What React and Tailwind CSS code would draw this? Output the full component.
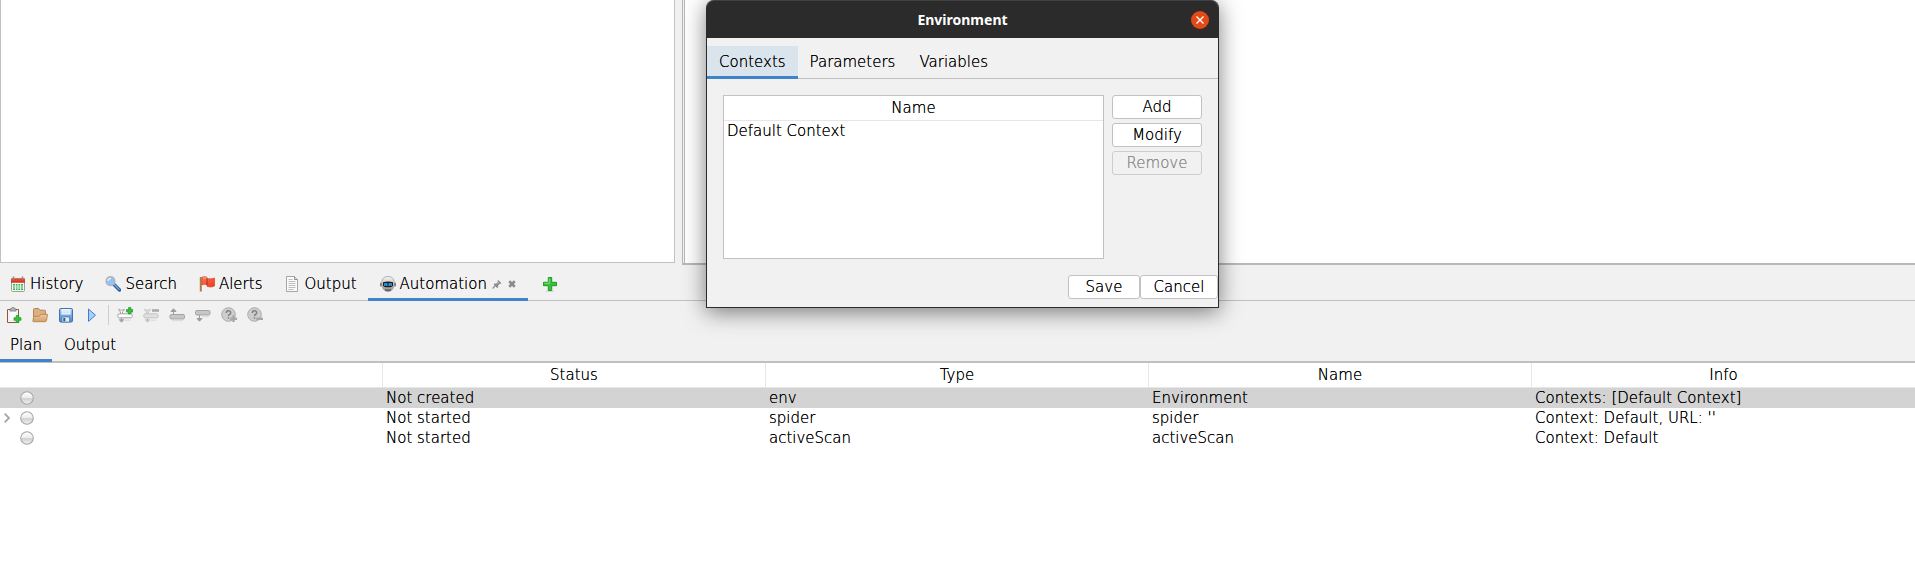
import React from "react";

function Svg({ children, className = "size-4" }) {
  return (
    <svg viewBox="0 0 16 16" className={className + " shrink-0"} fill="none" aria-hidden="true">
      {children}
    </svg>
  );
}

function Defs() {
  return (
    <svg className="absolute size-0" aria-hidden="true">
      <defs>
        <linearGradient id="wood" x1="0" y1="0" x2="0" y2="1">
          <stop offset="0" stopColor="#ecc9a2" />
          <stop offset="1" stopColor="#d79d66" />
        </linearGradient>
        <linearGradient id="blue" x1="0" y1="0" x2="0" y2="1">
          <stop offset="0" stopColor="#a9cdf2" />
          <stop offset="1" stopColor="#4a86cf" />
        </linearGradient>
        <linearGradient id="red" x1="0" y1="0" x2="1" y2="1">
          <stop offset="0" stopColor="#ff7a5c" />
          <stop offset="1" stopColor="#e63a1c" />
        </linearGradient>
        <linearGradient id="orbTop" x1="0" y1="0" x2="0" y2="1">
          <stop offset="0" stopColor="#ffffff" />
          <stop offset="0.5" stopColor="#ececec" />
          <stop offset="0.55" stopColor="#cfcfcf" />
          <stop offset="1" stopColor="#f4f4f4" />
        </linearGradient>
        <linearGradient id="robot" x1="0" y1="0" x2="0" y2="1">
          <stop offset="0" stopColor="#f8f8f8" />
          <stop offset="1" stopColor="#8c8c8c" />
        </linearGradient>
      </defs>
    </svg>
  );
}

const CalendarIcon = () => (
  <Svg>
    <rect x="1.5" y="2.5" width="13" height="13" rx="1" fill="#f4f7f4" stroke="#9aa39a" />
    <path d="M1 2.500h14v4H1z" fill="#e8442a" />
    <path d="M1 5.500h14v1H1z" fill="#b93220" />
    <path d="M3.500 0.500v3M12.500 0.500v3" stroke="#8d8d8d" strokeWidth="1.600" />
    <path d="M3 8h10v6H3z" fill="#3fae5a" />
    <path d="M3 10h10M3 12h10M5.500 8v6M8 8v6M10.500 8v6" stroke="#f1fff3" strokeWidth="0.800" />
  </Svg>
);

const SearchIcon = () => (
  <Svg>
    <path d="M9 8.500l5.500 5.500" stroke="#2b5c9e" strokeWidth="3.400" strokeLinecap="round" />
    <path d="M9.500 8.600l4.600 4.800" stroke="#7fb0ea" strokeWidth="1.300" strokeLinecap="round" />
    <circle cx="5.500" cy="5.200" r="4.300" fill="#8fc2fb" stroke="#b4b4b4" strokeWidth="1.600" />
    <path d="M3 5a2.600 2.600 0 0 1 3-2.500" stroke="#e6f3ff" strokeWidth="1.400" />
  </Svg>
);

const FlagIcon = () => (
  <Svg>
    <path d="M1.800 1v14.500" stroke="#b07a45" strokeWidth="2" />
    <path d="M3 1.200c2-.9 3.600-.7 5 .3v0.800c2 .8 4.500.8 7.500-.3v8c-3 1.300-5.500 1.200-7.500.2V8.800C6.500 8 5 8 3 8.800z" fill="url(#red)" stroke="#d8401f" strokeWidth="0.700" />
    <path d="M8 2.500v6.500" stroke="#b52a12" strokeWidth="1" />
    <path d="M3.800 2.200c1.400-.5 2.400-.4 3.500.2" stroke="#ffb7a2" strokeWidth="0.900" />
  </Svg>
);

const PageIcon = () => (
  <Svg>
    <path d="M2.500 0.500h8l3 3v12h-11z" fill="#fbfbfb" stroke="#a6a6a6" />
    <path d="M10.500 0.500v3h3" stroke="#8c8c8c" fill="#e2e2e2" />
    <path d="M4.500 3.500h4M4.500 5.500h7M4.500 7.500h7M4.500 9.500h7M4.500 11.500h7M4.500 13.500h5" stroke="#bdbdbd" />
  </Svg>
);

const RobotIcon = () => (
  <Svg>
    <rect x="0" y="6.500" width="2" height="4" rx="1" fill="#777777" />
    <rect x="14" y="6.500" width="2" height="4" rx="1" fill="#777777" />
    <path d="M8 0.500c4 0 6.300 2.600 6.300 6.300 0 5-2.300 8.700-6.300 8.700s-6.300-3.700-6.300-8.700C1.700 3.100 4 .5 8 .5z" fill="url(#robot)" stroke="#9a9a9a" strokeWidth="0.800" />
    <path d="M3 6.200q5-1.200 10 0v3.600q-1 1.400-2.500 1.400h-5Q4 11.200 3 9.800z" fill="#1c2026" />
    <path d="M4.800 10V7.800h2v2.200M9.200 10V7.800h2v2.200" stroke="#35a8f0" strokeWidth="1.300" />
    <path d="M5 13.300h6v1.500H5z" fill="#5c5c5c" />
  </Svg>
);

const PinIcon = () => (
  <Svg className="size-[10px]">
    <path d="M9.500 1l5.500 5.500-1.500 1.200-1-.3-2.800 2.900.2 2.700-1.600 1.500L2.500 8.700 4 7.200l2.600.1 2.900-2.800-.5-1.500z" fill="#8a8a8a" />
    <path d="M5 11L1 15.200" stroke="#8a8a8a" strokeWidth="2" />
    <path d="M8 7.500l3-3" stroke="#d2d2d2" strokeWidth="1.500" />
  </Svg>
);

const CrossIcon = () => (
  <Svg className="size-2">
    <path d="M2.500 2.500l11 11M13.500 2.500l-11 11" stroke="#8a8a8a" strokeWidth="5" />
  </Svg>
);

const PlusIcon = () => (
  <Svg>
    <path d="M4 15.300h8" stroke="#d6d6d6" strokeWidth="1.400" />
    <path d="M6.300 1.500h3.400v4.800h4.800v3.400H9.700v4.800H6.300V9.700H1.500V6.300h4.800z" fill="#35c13b" stroke="#1f9a27" />
    <path d="M7.300 2.500v4.800H2.500" stroke="#83e386" strokeWidth="0.900" />
  </Svg>
);

const NewPlanIcon = () => (
  <Svg>
    <path d="M1.500 2.500h11v13h-11z" fill="#ffffff" stroke="#8b5a3c" />
    <path d="M3 4h8v10H3z" fill="#fafafa" stroke="#dadada" strokeWidth="0.600" />
    <path d="M4 1.800h1.500a1.500 1.500 0 0 1 3 0H10v2.200H4z" fill="#b5b5b5" stroke="#777777" strokeWidth="0.700" />
    <path d="M10.200 8.500h2.600v2.200H15v2.600h-2.200v2.200h-2.600v-2.200H8v-2.600h2.200z" fill="#35c13b" stroke="#1f9a27" strokeWidth="0.700" />
  </Svg>
);

const FolderIcon = () => (
  <Svg>
    <path d="M1.500 14V2.500q0-1 1-1h4l1.500 1.700h4.500q1 0 1 1V10z" fill="#dcb085" stroke="#b98350" />
    <path d="M0.800 14.300l1-5h5.500l1.300-2h6.900l-1 6.200q-.2 1.200-1.400 1.200H1.500z" fill="url(#wood)" stroke="#b98350" strokeWidth="0.900" />
  </Svg>
);

const SaveIcon = () => (
  <Svg>
    <rect x="1.500" y="1.500" width="13" height="13.500" rx="1.200" fill="url(#blue)" stroke="#3f72b3" />
    <rect x="3.500" y="2" width="9" height="5.500" fill="#f4f8fd" />
    <path d="M4.500 4h7M4.500 5.800h7" stroke="#c2cedd" strokeWidth="0.800" />
    <rect x="4" y="10" width="7.500" height="5" fill="#e6ebf1" stroke="#3f72b3" strokeWidth="0.700" />
    <rect x="5.300" y="11" width="2" height="3.300" fill="#31598f" />
  </Svg>
);

const PlayIcon = () => (
  <Svg>
    <path d="M4.500 2l7 6.200-7 6.200z" fill="#a9cff8" stroke="#3a7fd0" strokeLinejoin="round" />
  </Svg>
);

const Plug = ({ fill, stroke }) => (
  <>
    <path d="M3.500 6.800V4.800q-1.800-1-1.800-2.500L3.500 3.200h2l1.800-.9q0 1.500-1.800 2.500v2" fill={fill} stroke={stroke} />
    <rect x="0.800" y="6.800" width="14.400" height="4" rx="1.400" fill={fill} stroke={stroke} />
    <path d="M4.500 10.800v2.500M2.300 12.700l2.200 2.500 2.200-2.500z" fill={stroke} stroke={stroke} />
    <path d="M7.500 13.300h6" stroke="#e0e0e0" strokeWidth="1.500" />
  </>
);

const AddJobIcon = () => (
  <Svg>
    <Plug fill="#ffffff" stroke="#a3a3a3" />
    <path d="M11.500 0.600h2.400v2h2v2.400h-2v2h-2.400v-2h-2V2.600h2z" fill="#35c13b" stroke="#1f9a27" strokeWidth="0.700" />
  </Svg>
);

const RemoveJobIcon = () => (
  <Svg>
    <Plug fill="#e0e0e0" stroke="#c4c4c4" />
    <rect x="9" y="2.200" width="7" height="2.600" fill="#ababab" />
  </Svg>
);

const MoveUpIcon = () => (
  <Svg>
    <path d="M4.500 8V3.500M2 4.500L4.500 1.800 7 4.500z" stroke="#9c9c9c" fill="#9c9c9c" />
    <rect x="1" y="7.500" width="14.500" height="4.500" rx="1.400" fill="#c6c6c6" stroke="#a3a3a3" />
    <path d="M3 13.500h11" stroke="#dddddd" strokeWidth="1.500" />
  </Svg>
);

const MoveDownIcon = () => (
  <Svg>
    <rect x="0.500" y="3.500" width="14.500" height="4.500" rx="1.400" fill="#c6c6c6" stroke="#a3a3a3" />
    <path d="M4.500 8v4M2 11.500l2.500 2.700L7 11.500z" stroke="#9c9c9c" fill="#9c9c9c" />
    <path d="M7 9.500h7" stroke="#dddddd" strokeWidth="1.500" />
  </Svg>
);

const TestIcon = ({ plus }) => (
  <Svg>
    <circle cx="7.500" cy="7.500" r="6.800" fill="#cdcdcd" stroke="#ababab" />
    <path d="M5.300 6c0-3 4.400-2.800 4.400-.3 0 1.700-2.200 1.700-2.200 3.400M7.500 10.200v1.600" stroke="#808080" strokeWidth="1.500" />
    {plus && <path d="M12.500 8.500v6.500" stroke="#a6a6a6" strokeWidth="2.400" />}
    <path d="M9.300 11.800H16" stroke="#a6a6a6" strokeWidth="2.400" />
  </Svg>
);

const StatusOrb = () => (
  <Svg className="size-[14px]">
    <circle cx="8" cy="8" r="7.200" fill="url(#orbTop)" stroke="#a5a5a5" strokeWidth="1.200" />
  </Svg>
);

const Chevron = () => (
  <svg viewBox="0 0 6 10" className="h-[10px] w-[6px]" fill="none" aria-hidden="true">
    <path d="M0.700 0.700L5 5 0.700 9.300" stroke="#a6a6a6" strokeWidth="1.800" />
  </svg>
);

const mainTabs = [
  { name: "History", Icon: CalendarIcon },
  { name: "Search", Icon: SearchIcon },
  { name: "Alerts", Icon: FlagIcon },
  { name: "Output", Icon: PageIcon },
  { name: "Automation", Icon: RobotIcon, active: true },
];

const tools = [
  { name: "New Plan", Icon: NewPlanIcon },
  { name: "Load Plan", Icon: FolderIcon },
  { name: "Save Plan", Icon: SaveIcon },
  { name: "Run Plan", Icon: PlayIcon },
];

const jobTools = [
  { name: "Add Job", Icon: AddJobIcon },
  { name: "Remove Job", Icon: RemoveJobIcon, disabled: true },
  { name: "Move Job Up", Icon: MoveUpIcon, disabled: true },
  { name: "Move Job Down", Icon: MoveDownIcon, disabled: true },
  { name: "Add Test", Icon: () => <TestIcon plus />, disabled: true },
  { name: "Remove Test", Icon: () => <TestIcon />, disabled: true },
];

const jobs = [
  { status: "Not created", type: "env", name: "Environment", info: "Contexts: [Default Context]", selected: true },
  { status: "Not started", type: "spider", name: "spider", info: "Context: Default, URL: ''", expandable: true },
  { status: "Not started", type: "activeScan", name: "activeScan", info: "Context: Default" },
];

function ToolButton({ name, Icon, disabled }) {
  return (
    <button type="button" aria-label={name} disabled={disabled}>
      <Icon />
    </button>
  );
}

function MainTabs() {
  return (
    <div role="tablist" className="flex h-9 pt-1 shadow-[inset_0_-1px_0_#c0c0c0]">
      {mainTabs.map(({ name, Icon, active }) => (
        <div key={name} className={"flex items-center gap-1 border-b-[3px] pt-px first:pl-[10px] " + (active ? "border-[#4083c9] px-3" : "border-transparent px-[11px]")}>
          <button type="button" role="tab" aria-selected={!!active} className="flex items-center gap-1">
            <Icon />
            {name}
          </button>
          {active && (
            <>
              <button type="button" aria-label="Pin tab" className="px-[1px]"><PinIcon /></button>
              <button type="button" aria-label="Close tab" className="pl-[1px]"><CrossIcon /></button>
            </>
          )}
        </div>
      ))}
      <button type="button" aria-label="Add tab" className="border-b-[3px] border-transparent px-[14px]"><PlusIcon /></button>
    </div>
  );
}

function PlanTable() {
  return (
    <table className="w-full table-fixed border-separate border-spacing-0">
      <thead>
        <tr className="bg-white">
          {["", "Status", "Type", "Name", "Info"].map((h) => (
            <th key={h} scope="col" className="h-[25px] border-r border-b border-[#e6e6e6] p-0 font-extralight leading-5 last:border-r-0">{h}</th>
          ))}
        </tr>
      </thead>
      <tbody>
        {jobs.map((job) => (
          <tr key={job.type} className={job.selected ? "bg-[#d3d3d3]" : "bg-white"}>
            <td className="p-0">
              <div className="flex h-5 items-center pl-[4px]">
                <span className="flex w-4">{job.expandable && <Chevron />}</span>
                <StatusOrb />
              </div>
            </td>
            {[job.status, job.type, job.name, job.info].map((v, i) => (
              <td key={i} className="truncate py-0 pr-0 pl-[3px] leading-5">{v}</td>
            ))}
          </tr>
        ))}
      </tbody>
    </table>
  );
}

const buttonClass = "h-6 rounded-[3px] border border-[#c2c2c2] bg-white leading-5 disabled:border-[#cdcdcd] disabled:bg-[#f1f1f1] disabled:text-[#8c8c8c]";

function EnvironmentDialog() {
  return (
    <section role="dialog" aria-labelledby="dialog-title" className="absolute top-0 left-[706px] w-[513px] rounded-t-lg border border-t-0 border-[#2b2b2b] bg-[#f1f1f1] shadow-[0_4px_22px_rgba(0,0,0,0.5)]">
      <header className="relative flex h-[38px] items-center justify-center rounded-t-[7px] border-t border-[#404040] bg-[#2b2b2b]">
        <h2 id="dialog-title" className="font-['Noto_Sans',sans-serif] text-[14px] font-bold text-white [text-shadow:none]">Environment</h2>
        <button type="button" aria-label="Close" className="absolute right-[9px] flex size-[18px] items-center justify-center rounded-full bg-[#e04a16]">
          <svg viewBox="0 0 8 8" className="size-2" aria-hidden="true">
            <path d="M0.500 0.500l7 7M7.500 0.500l-7 7" stroke="#ffffff" strokeWidth="1.300" />
          </svg>
        </button>
      </header>
      <div className="pt-2">
        <div role="tablist" className="flex h-[33px] shadow-[inset_0_-1px_0_#c0c0c0]">
          {["Contexts", "Parameters", "Variables"].map((t, i) => (
            <button key={t} type="button" role="tab" aria-selected={i === 0} className={"border-b-[3px] px-3 pt-[2px] " + (i === 0 ? "border-[#4083c9] bg-[#dae4ed]" : "border-transparent")}>{t}</button>
          ))}
        </div>
        <div className="flex gap-2 p-4">
          <div className="h-[164px] min-w-0 flex-1 border border-[#c2c2c2] bg-white">
            <table className="w-full border-separate border-spacing-0">
              <thead>
                <tr><th scope="col" className="h-[25px] border-b border-[#e6e6e6] p-0 font-extralight leading-5">Name</th></tr>
              </thead>
              <tbody>
                <tr><td className="py-0 pr-0 pl-[3px] leading-5">Default Context</td></tr>
              </tbody>
            </table>
          </div>
          <div className="flex w-[90px] flex-col gap-1">
            <button type="button" className={buttonClass}>Add</button>
            <button type="button" className={buttonClass}>Modify</button>
            <button type="button" disabled className={buttonClass}>Remove</button>
          </div>
        </div>
      </div>
      <footer className="flex justify-end pb-2">
        <button type="button" className={buttonClass + " w-[72px]"}>Save</button>
        <button type="button" className={buttonClass + " w-[78px]"}>Cancel</button>
      </footer>
    </section>
  );
}

export default function App() {
  return (
    <div className="relative flex min-h-screen flex-col bg-[#f1f1f1] font-['DejaVu_Sans',sans-serif] text-[15px] font-extralight leading-5 text-black [text-shadow:0_0_0_currentColor] [&_button]:[text-shadow:0_0_0_currentColor]">
      <Defs />
      <div className="flex gap-[7px]">
        <div className="mb-[2px] h-[263px] flex-[674] border border-t-0 border-[#c2c2c2] bg-white" />
        <div className="flex h-[265px] flex-[1233] border-b-2 border-l border-[#b8b8b8] bg-[#f1f1f1] pl-[1px]">
          <div className="flex-1 border-l border-[#b8b8b8] bg-white" />
        </div>
      </div>
      <MainTabs />
      <div role="toolbar" className="flex h-[29px] items-center gap-[10px] pb-[2px] pl-[6px]">
        {tools.map((t) => <ToolButton key={t.name} {...t} />)}
        <div className="-mx-[2px] h-5 w-px bg-[#cdcdcd]" />
        {jobTools.map((t) => <ToolButton key={t.name} {...t} />)}
      </div>
      <div role="tablist" className="flex h-[33px] pb-px shadow-[inset_0_-2px_0_#c0c0c0]">
        <button type="button" role="tab" aria-selected="true" className="border-b-[3px] border-[#4083c9] px-[10px] pt-px">Plan</button>
        <button type="button" role="tab" aria-selected="false" className="border-b-[3px] border-transparent px-3 pt-px">Output</button>
      </div>
      <main className="flex-1 bg-white">
        <PlanTable />
      </main>
      <EnvironmentDialog />
    </div>
  );
}
